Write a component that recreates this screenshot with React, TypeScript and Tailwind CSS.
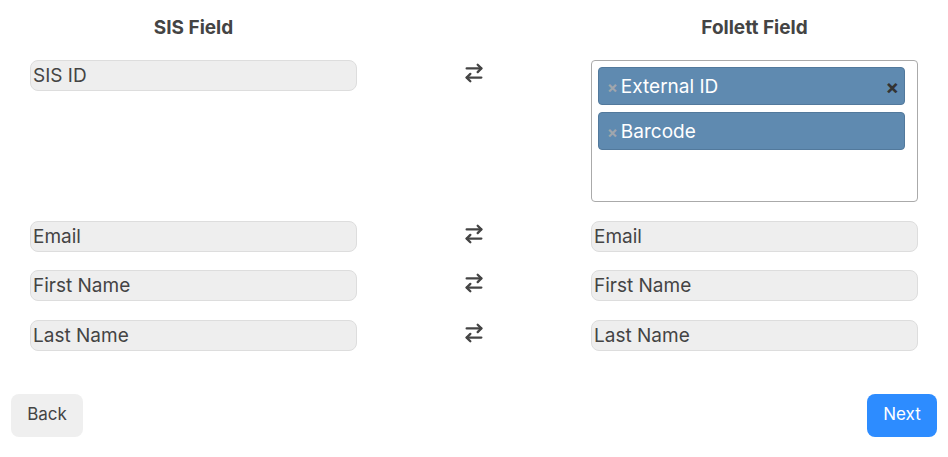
import React from "react";

const rows = [
  { sis: "Email", follett: "Email" },
  { sis: "First Name", follett: "First Name" },
  { sis: "Last Name", follett: "Last Name" },
];

function SwapIcon() {
  return (
    <svg
      width="22"
      height="22"
      viewBox="0 0 24 24"
      fill="none"
      stroke="currentColor"
      strokeWidth={2.5}
      strokeLinecap="round"
      strokeLinejoin="round"
      className="text-[#444]"
    >
      <path d="m16 3 4 4-4 4" />
      <path d="M20 7H4" />
      <path d="m8 21-4-4 4-4" />
      <path d="M4 17h16" />
    </svg>
  );
}

function FieldBox({ label }: { label: string }) {
  return (
    <div className="h-[31px] w-full flex items-center pl-[2px] pt-[2px] bg-[#eeeeee] border border-[#dddddd] rounded-[8px] text-[19px] text-[#444]">
      {label}
    </div>
  );
}

function Tag({ label, clear }: { label: string; clear?: boolean }) {
  return (
    <div className="h-[38px] flex items-center bg-[#5f8ab0] border border-[#52799c] rounded-[4px] text-white text-[19px] pl-[8px] pr-[5px] pt-[2px]">
      <span className="text-[#a0a6ad] text-[16px] font-bold mr-[3px] leading-none">×</span>
      <span className="flex-1">{label}</span>
      {clear && <span className="text-[#333] text-[20px] font-bold leading-none">×</span>}
    </div>
  );
}

export default function App() {
  return (
    <div
      className="w-[948px] h-[457px] bg-white text-[#444]"
      style={{ fontFamily: "Inter, 'Noto Sans', sans-serif" }}
    >
      <div className="grid grid-cols-[327px_1fr_327px] px-[30px] pt-[14px]">
        <div className="text-center font-bold text-[19px] leading-[27px]">SIS Field</div>
        <div />
        <div className="text-center font-bold text-[19px] leading-[27px]">Follett Field</div>
      </div>

      <div className="flex flex-col gap-[18.5px] px-[30px] mt-[19px]">
        {/* first row with multi select */}
        <div className="grid grid-cols-[327px_1fr_327px] items-start">
          <FieldBox label="SIS ID" />
          <div className="flex justify-center pt-[2px]">
            <SwapIcon />
          </div>
          <div className="h-[142px] border border-[#aaaaaa] rounded-[4px] pl-[6px] pr-[12px] pt-[6px] flex flex-col gap-[7px]">
            <Tag label="External ID" clear />
            <Tag label="Barcode" />
          </div>
        </div>

        {rows.map((r) => (
          <div key={r.sis} className="grid grid-cols-[327px_1fr_327px] items-start">
            <FieldBox label={r.sis} />
            <div className="flex justify-center pt-[2px]">
              <SwapIcon />
            </div>
            <FieldBox label={r.follett} />
          </div>
        ))}
      </div>

      <div className="flex justify-between px-[11px] mt-[43px]">
        <button className="w-[72px] h-[43px] rounded-[8px] bg-[#efefef] text-[17px] text-[#444]">
          Back
        </button>
        <button className="w-[70px] h-[43px] rounded-[8px] bg-[#2d8cff] text-[17px] text-white">
          Next
        </button>
      </div>
    </div>
  );
}
